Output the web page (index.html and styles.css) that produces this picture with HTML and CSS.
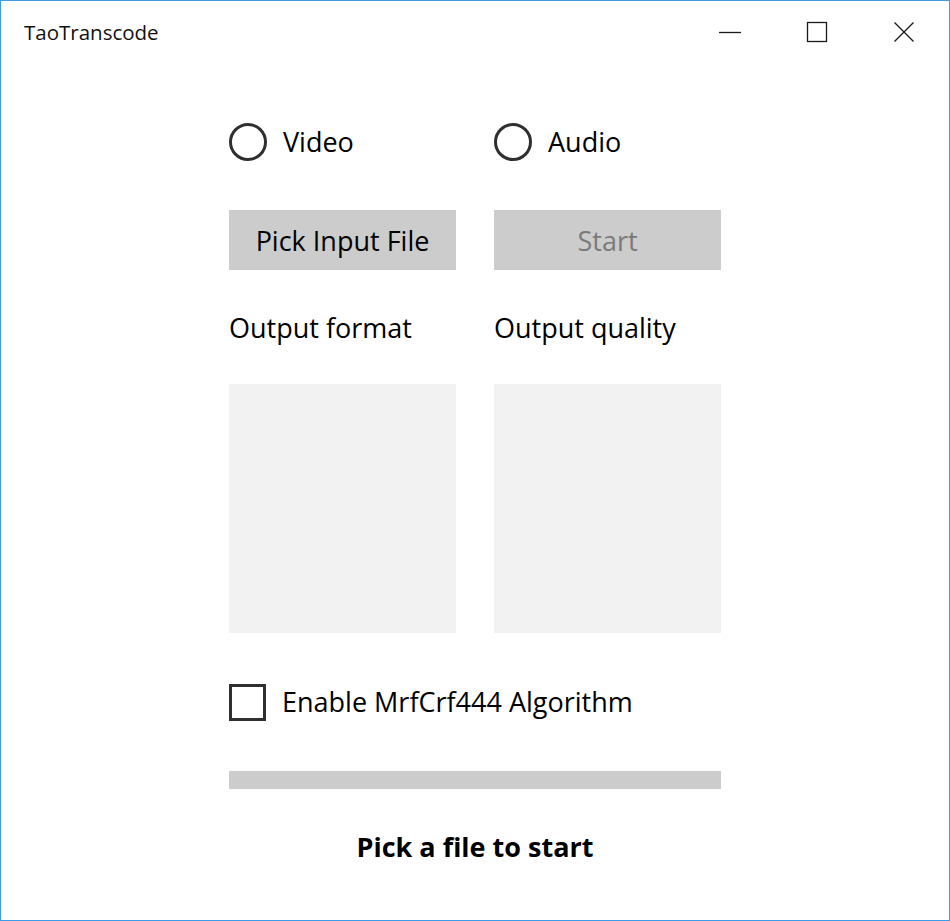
FILE: index.html
```html
<!DOCTYPE html>
<html lang="en">
<head>
<meta charset="utf-8">
<title>TaoTranscode</title>
<link rel="stylesheet" href="styles.css">
</head>
<body>
<div class="window">
  <div class="titlebar">
    <div class="app-title">TaoTranscode</div>
    <div class="caption-buttons">
      <div class="cap-btn">
        <svg width="24" height="24" viewBox="0 0 24 24"><line x1="1" y1="12.5" x2="23" y2="12.5" stroke="#1a1a1a" stroke-width="1.3"/></svg>
      </div>
      <div class="cap-btn">
        <svg width="24" height="24" viewBox="0 0 24 24"><rect x="2.5" y="2.5" width="19" height="19" fill="none" stroke="#1a1a1a" stroke-width="1.3"/></svg>
      </div>
      <div class="cap-btn">
        <svg width="24" height="24" viewBox="0 0 24 24"><path d="M2.5 2.5 L21.5 21.5 M21.5 2.5 L2.5 21.5" stroke="#1a1a1a" stroke-width="1.3" fill="none"/></svg>
      </div>
    </div>
  </div>

  <div class="content">
    <div class="row radios">
      <label class="radio"><span class="radio-circle"></span><span class="radio-label">Video</span></label>
      <label class="radio"><span class="radio-circle"></span><span class="radio-label">Audio</span></label>
    </div>

    <div class="row buttons">
      <div class="btn">Pick Input File</div>
      <div class="btn disabled">Start</div>
    </div>

    <div class="row labels">
      <div class="field-label">Output format</div>
      <div class="field-label">Output quality</div>
    </div>

    <div class="row lists">
      <div class="listbox"></div>
      <div class="listbox"></div>
    </div>

    <label class="checkbox"><span class="check-box"></span><span class="check-label">Enable MrfCrf444 Algorithm</span></label>

    <div class="progress"></div>

    <div class="status">Pick a file to start</div>
  </div>
</div>
</body>
</html>
```

FILE: styles.css
```css
html, body {
  margin: 0;
  padding: 0;
  background: #ffffff;
}

.window {
  width: 950px;
  height: 921px;
  box-sizing: border-box;
  border: 1px solid #3f9be6;
  background: #ffffff;
  font-family: "Open Sans", "Noto Sans", sans-serif;
  color: #000000;
}

.titlebar {
  height: 62px;
  display: flex;
  align-items: center;
  justify-content: space-between;
}

.app-title {
  padding-left: 23px;
  font-size: 20.5px;
  color: #111111;
}

.caption-buttons {
  display: flex;
  padding-right: 2px;
}

.cap-btn {
  width: 87px;
  height: 62px;
  display: flex;
  align-items: center;
  justify-content: center;
}

.content {
  width: 492px;
  margin: 0 auto;
  display: flex;
  flex-direction: column;
}

.row {
  display: grid;
  grid-template-columns: 227px 227px;
  column-gap: 38px;
}

.radios {
  margin-top: 60px;
  height: 38px;
}

.radio {
  display: flex;
  align-items: center;
  gap: 16px;
}

.radio-circle {
  width: 38px;
  height: 38px;
  box-sizing: border-box;
  border: 3px solid #2f2f2f;
  border-radius: 50%;
  flex: none;
}

.radio-label,
.check-label,
.field-label,
.btn {
  font-size: 27px;
}

.radio-label,
.check-label {
  margin-top: -2px;
}

.buttons {
  margin-top: 49px;
}

.btn {
  height: 60px;
  background: #cccccc;
  display: flex;
  align-items: center;
  justify-content: center;
}

.btn.disabled {
  color: #7a7a7a;
}

.labels {
  margin-top: 40px;
  height: 36px;
  align-items: center;
}

.field-label {
  margin-top: -2px;
}

.lists {
  margin-top: 38px;
}

.listbox {
  height: 249px;
  background: #f2f2f2;
}

.checkbox {
  margin-top: 51px;
  display: flex;
  align-items: center;
  gap: 16px;
  height: 37px;
}

.check-box {
  width: 37px;
  height: 37px;
  box-sizing: border-box;
  border: 3px solid #2f2f2f;
  flex: none;
}

.progress {
  margin-top: 50px;
  height: 18px;
  background: #cccccc;
}

.status {
  margin-top: 42px;
  height: 32px;
  line-height: 32px;
  text-align: center;
  font-weight: 700;
  font-size: 27px;
}
```
